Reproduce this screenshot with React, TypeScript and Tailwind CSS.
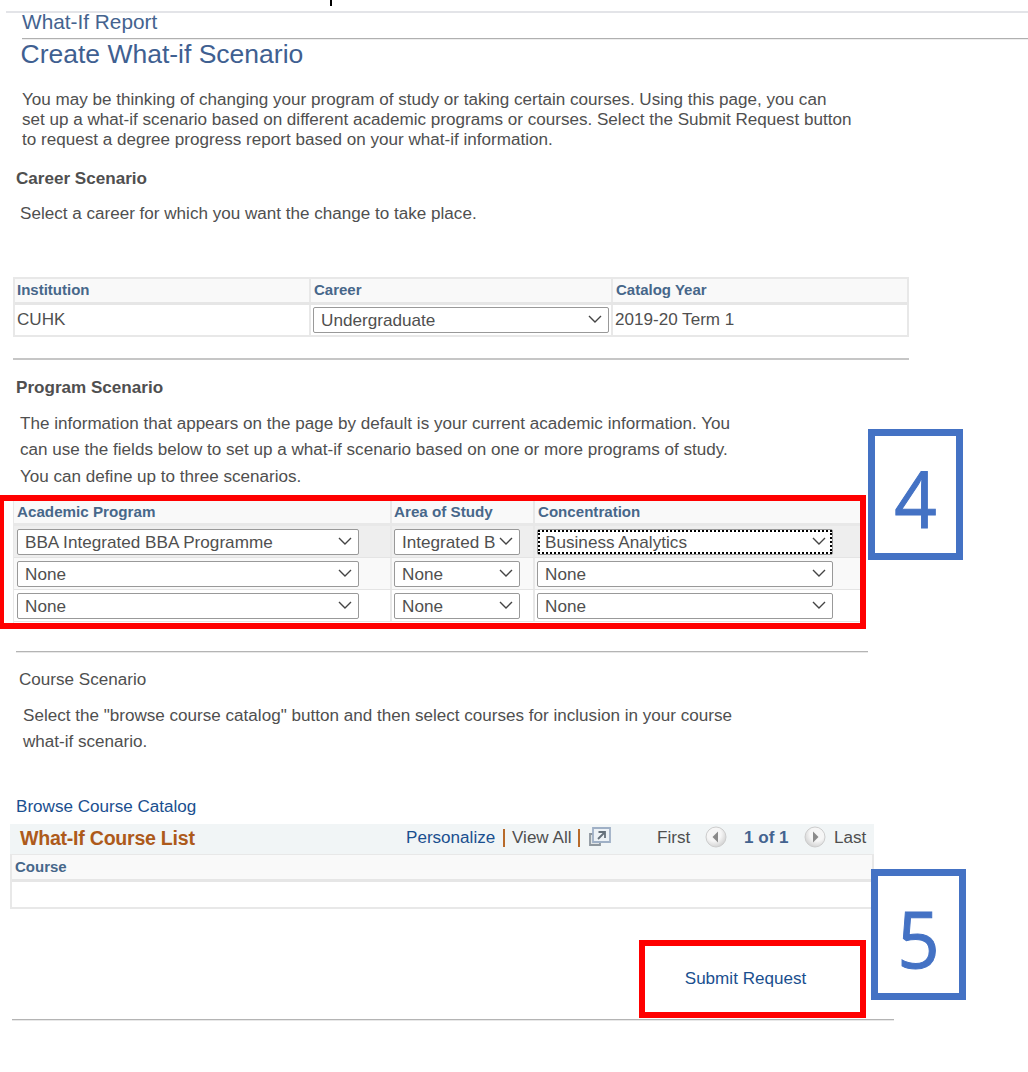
import React from "react";

const head = "text-[15px] font-bold text-[#47678a] whitespace-nowrap";

function Select({ value, width, focused = false }: {
  value: string;
  width: string;
  focused?: boolean;
}) {
  return (
    <button type="button" className={`relative flex h-[26px] items-center justify-between rounded-[2px] border border-[#999] bg-white pl-[7px] pr-[6px] text-[17.15px] leading-[24px] text-[#4f4f4f] ${width}`}>
      <span className="whitespace-nowrap text-left">{value}</span>
      <svg width="14" height="8" viewBox="0 0 14 8" fill="none" stroke="#444" strokeWidth="1.4" className="relative -top-px shrink-0">
        <path d="M1 1l6 6 6-6" />
      </svg>
      {focused && <span className="absolute inset-0 border-2 border-dotted border-black" />}
    </button>
  );
}

function ProgramRow({ values, bg, focused = false }: { values: string[]; bg: string; focused?: boolean }) {
  return (
    <div className={`grid h-8 grid-cols-[376px_143px_333px] items-stretch border-b border-[#e4e4e4] ${bg}`}>
      <div className="flex items-center pl-[3px]"><Select value={values[0]} width="w-[342px]" /></div>
      <div className="flex items-center border-l-2 border-[#e8e8e8] pl-[2px]"><Select value={values[1]} width="w-[126px]" /></div>
      <div className="flex items-center border-l-2 border-[#e8e8e8] pl-[2px]"><Select value={values[2]} width="w-[296px]" focused={focused} /></div>
    </div>
  );
}

function Pager({ next = false }: { next?: boolean }) {
  return (
    <svg width="22" height="22" viewBox="0 0 22 22" className={`relative -top-px ${next ? "-scale-x-100" : ""}`}>
      <defs>
        <radialGradient id={next ? "pn" : "pp"} cx="0.4" cy="0.35" r="0.7">
          <stop offset="0.5" stopColor="#f6f6f6" />
          <stop offset="1" stopColor="#cfcfcf" />
        </radialGradient>
      </defs>
      <circle cx="11" cy="11" r="10" fill={next ? "url(#pn)" : "url(#pp)"} stroke="#cdcdcd" />
      <path d="M7.5 11l5.5-5.5v11z" fill="#8b8b8b" />
    </svg>
  );
}

function Callout({ n, place }: { n: string; place: string }) {
  return (
    <div className={`absolute h-[131px] w-[95px] border-[7px] border-[#4472c4] bg-white pt-[14px] text-center font-['Open_Sans',sans-serif] text-[79px] leading-[96px] text-[#4472c4] ${place}`}>
      <span className="inline-block scale-x-[0.94] [-webkit-text-stroke:1px_#4472c4]">{n}</span>
    </div>
  );
}

export default function App() {
  return (
    <main className="relative flex h-[1072px] w-[1028px] flex-col items-start overflow-hidden bg-white font-['Liberation_Sans',Arial,sans-serif] text-[17.08px] text-[#4f4f4f]">
      <div className="absolute left-[330px] top-0 h-[6px] w-[2px] bg-black" />

      <header className="mt-[11px] w-full pl-[6px]">
        <div className="border-t-2 border-[#e3e4e8] pl-4">
          <div className="h-[25px] text-[20.8px] leading-[17px] whitespace-nowrap text-[#44638f]">What-If Report</div>
          <div className="h-[2px] border-t border-[#b0b0b0] bg-[#eee]" />
        </div>
      </header>
      <h1 className="ml-[20.5px] h-[50px] text-[26.5px] leading-[29px] whitespace-nowrap text-[#3f6091]">Create What-if Scenario</h1>
      <p className="ml-[22px] h-[60px] whitespace-nowrap text-[17.09px] leading-5">
        You may be thinking of changing your program of study or taking certain courses. Using this page, you can<br />
        set up a what-if scenario based on different academic programs or courses. Select the Submit Request button<br />
        to request a degree progress report based on your what-if information.
      </p>
      <h2 className="ml-4 mt-[19px] h-5 font-bold leading-5">Career Scenario</h2>
      <p className="ml-5 mt-[15px] h-5 leading-5">Select a career for which you want the change to take place.</p>

      <section className="mt-[53px] ml-[13px] w-[896px] border-2 border-[#e8e8e8]">
        <div className={`grid h-[23px] grid-cols-[294px_302px_296px] bg-[#f9f9f9] leading-[22px] ${head}`}>
          <div className="pl-[2px]">Institution</div>
          <div className="border-l-2 border-[#e8e8e8] pl-[3px]">Career</div>
          <div className="border-l-2 border-[#e8e8e8] pl-[3px]">Catalog Year</div>
        </div>
        <div className="grid h-[33px] grid-cols-[294px_302px_296px] border-t-3 border-[#e6e6e6] leading-[30px]">
          <div className="pl-[2px]">CUHK</div>
          <div className="flex items-center border-l-2 border-[#e8e8e8] pl-[2px]"><Select value="Undergraduate" width="w-[296px]" /></div>
          <div className="border-l-2 border-[#e8e8e8] pl-[2px]">2019-20 Term 1</div>
        </div>
      </section>
      <div className="ml-[13px] mt-[21px] h-[2px] w-[896px] bg-[#c6c6c6]" />

      <h2 className="ml-4 mt-[18px] h-5 font-bold leading-5">Program Scenario</h2>
      <p className="ml-5 mt-[13px] h-[79px] whitespace-nowrap leading-[26.3px]">
        The information that appears on the page by default is your current academic information. You<br />
        can use the fields below to set up a what-if scenario based on one or more programs of study.<br />
        You can define up to three scenarios.
      </p>
      <section className="ml-[13px] mt-[9px] h-[124px] w-[853px] border-l border-[#e8e8e8]">
        <div className={`grid h-[27px] grid-cols-[376px_143px_333px] border-b-3 border-[#e8e8e8] bg-[#f9f9f9] leading-[25px] ${head}`}>
          <div className="pl-[3px] text-[15.2px]">Academic Program</div>
          <div className="border-l-2 border-[#e8e8e8] pl-[2px] text-[15.2px]">Area of Study</div>
          <div className="border-l-2 border-[#e8e8e8] pl-[3px] text-[15.1px]">Concentration</div>
        </div>
        <ProgramRow values={["BBA Integrated BBA Programme", "Integrated B", "Business Analytics"]} bg="bg-[#eeeeee]" focused />
        <ProgramRow values={["None", "None", "None"]} bg="bg-[#f9f9f9]" />
        <ProgramRow values={["None", "None", "None"]} bg="bg-white" />
      </section>
      <div className="ml-4 mt-[28px] h-[2px] w-[852px] border-t border-[#b4b4b4] bg-[#e8e8e8]" />

      <h2 className="ml-[19px] mt-[17px] h-5 leading-5">Course Scenario</h2>
      <p className="ml-[23px] mt-[13px] h-[53px] whitespace-nowrap leading-[26.3px]">
        Select the "browse course catalog" button and then select courses for inclusion in your course<br />
        what-if scenario.
      </p>
      <a className="ml-4 mt-[41px] h-5 leading-5 text-[#1a4f8f]">Browse Course Catalog</a>

      <section className="ml-[10px] mt-[7px] w-[864px]">
        <div className="flex h-[30px] items-center bg-[#f1f5f6] pb-[3px] leading-[26px] whitespace-nowrap">
          <h3 className="w-[396px] pl-[10px] text-[19.6px] font-bold tracking-[-0.26px] text-[#ad5a1b]">What-If Course List</h3>
          <a className="w-[97px] text-[#1a4f8f]">Personalize</a>
          <span className="mr-[7px] h-[18px] w-[2px] bg-[#b86a2a]" />
          <span className="w-[66px]">View All</span>
          <span className="mr-[9px] h-[18px] w-[2px] bg-[#b86a2a]" />
          <svg width="22" height="19" viewBox="0 0 22 19" fill="none" className="relative -top-px mr-[46px]">
            <path d="M1 7h10v11H1z" fill="#e0e4e6" stroke="#8e979e" strokeWidth="1.8" />
            <path d="M4 1h17v14H4z" fill="#edf2f6" stroke="#9fb0c6" strokeWidth="1.8" />
            <path d="M9 12l6-6M9.5 5h6.5v6" stroke="#66717b" strokeWidth="1.8" />
          </svg>
          <span className="w-[48px]">First</span>
          <Pager />
          <span className="ml-[17px] w-[60px] font-bold text-[#44638f]">1 of 1</span>
          <Pager next />
          <span className="ml-[8px]">Last</span>
        </div>
        <div className="border-2 border-t border-[#e8e8e8]">
          <div className={`h-[24px] bg-[#f9f9f9] pl-[3px] leading-[23px] ${head}`}>Course</div>
          <div className="h-[28px] border-t-3 border-[#e6e6e6]" />
        </div>
      </section>

      <div className="ml-[639px] mt-[31px] flex h-[78px] w-[227px] items-center justify-center border-[6px] border-[#f00] pr-[14px]">
        <a className="whitespace-nowrap leading-5 text-[#1a4f8f]">Submit Request</a>
      </div>
      <div className="ml-3 mt-[1px] h-[2px] w-[882px] border-t border-[#b4b4b4] bg-[#e8e8e8]" />

      <div className="absolute left-[-2px] top-[495px] h-[134px] w-[868px] border-[6px] border-[#f00]" />
      <Callout n="4" place="left-[868px] top-[429px]" />
      <Callout n="5" place="left-[871px] top-[869px]" />
    </main>
  );
}
